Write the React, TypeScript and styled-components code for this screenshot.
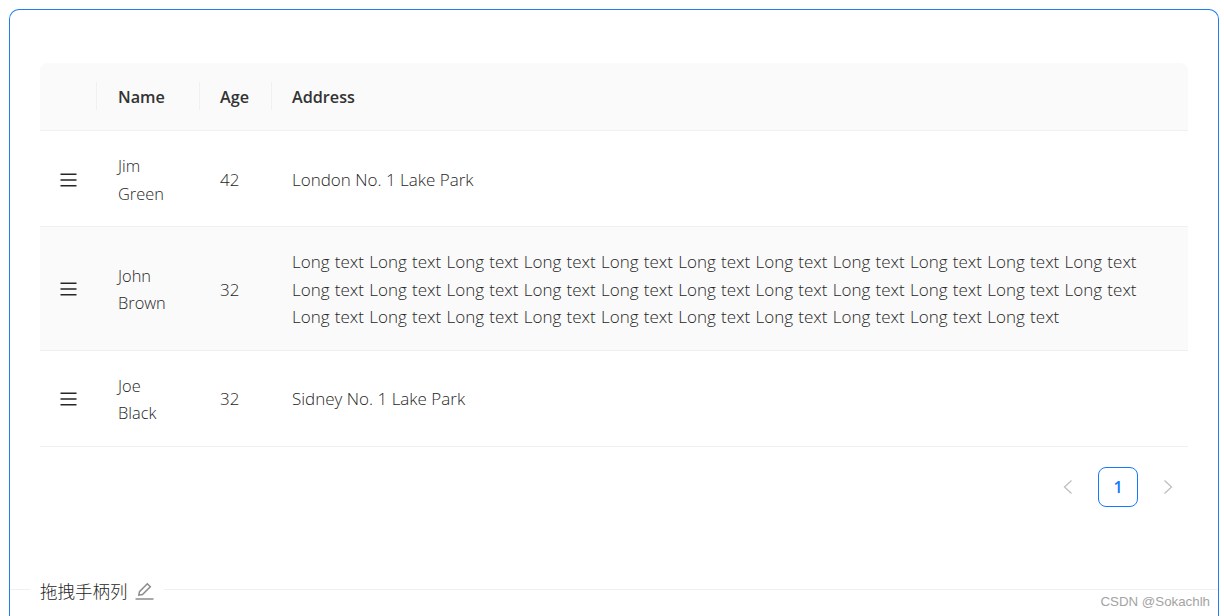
import styled, { createGlobalStyle } from 'styled-components';

const longText = Array(32).fill('Long text').join(' ');

const rows = [
  { key: 1, name: 'Jim Green', age: 42, address: 'London No. 1 Lake Park' },
  { key: 2, name: 'John Brown', age: 32, address: longText },
  { key: 3, name: 'Joe Black', age: 32, address: 'Sidney No. 1 Lake Park' },
];

const DragHandle = () => (
  <svg width="17" height="14" viewBox="0 0 17 14" fill="none" stroke="#262626" strokeWidth="1.4">
    <path d="M0.5 1.2h16M0.5 7h16M0.5 12.8h16" />
  </svg>
);

const EditIcon = () => (
  <svg width="19" height="18" viewBox="0 0 19 18" fill="none" stroke="#8c8c8c" strokeWidth="1.5">
    <path d="M3.8 13.2l.7-3.6 7.8-7.8 3 3-7.8 7.8z" />
    <path d="M0.5 17h18" />
  </svg>
);

const Chevron = ({ right }: { right?: boolean }) => (
  <svg width="10" height="14" viewBox="0 0 10 14" fill="none" stroke="#bfbfbf" strokeWidth="1.3">
    <path d={right ? 'M1.5 .5L8.5 7L1.5 13.5' : 'M8.5 .5L1.5 7L8.5 13.5'} />
  </svg>
);

const App = () => (
  <>
    <GlobalStyle />
    <Frame>
      <StyledTable>
        <colgroup>
          <col width={57} />
          <col width={103} />
          <col width={72} />
          <col />
        </colgroup>
        <thead>
          <tr>
            <HeadCell />
            <NameHeadCell>Name</NameHeadCell>
            <HeadCell>Age</HeadCell>
            <HeadCell>Address</HeadCell>
          </tr>
        </thead>
        <tbody>
          {rows.map((row) => (
            <Row key={row.key} $striped={row.key === 2}>
              <HandleCell>
                <DragHandle />
              </HandleCell>
              <NameCell>{row.name}</NameCell>
              <Cell>{row.age}</Cell>
              <Cell $loose={row.address === longText}>{row.address}</Cell>
            </Row>
          ))}
        </tbody>
      </StyledTable>

      <Pagination>
        <PageArrow>
          <Chevron />
        </PageArrow>
        <PageButton>1</PageButton>
        <PageArrow>
          <Chevron right />
        </PageArrow>
      </Pagination>

      <Divider>
        <DividerTitle>
          拖拽手柄列
          <EditIcon />
        </DividerTitle>
      </Divider>
    </Frame>
    <Watermark>CSDN @Sokachlh</Watermark>
  </>
);

export default App;

/** STYLED COMPONENTS  **/

const GlobalStyle = createGlobalStyle`
  html, body {
    margin: 0;
    height: 616px;
    overflow: hidden;
    background: #fff;
  }
  body {
    padding: 9px 5px 0 9px;
    box-sizing: border-box;
    font-family: "Open Sans", "Noto Sans CJK SC", sans-serif;
    font-size: 16px;
    color: #262626;
  }
`;

const Frame = styled.div`
  height: 607px;
  padding: 53px 30px 0;
  box-sizing: border-box;
  border: 1px solid #1f7cf2;
  border-bottom: none;
  border-radius: 10px 10px 0 0;
  overflow: hidden;
`;

const StyledTable = styled.table`
  width: 100%;
  table-layout: fixed;
  border-collapse: separate;
  border-spacing: 0;
  line-height: 27.5px;
`;

const HeadCell = styled.th`
  position: relative;
  height: 68px;
  box-sizing: border-box;
  padding: 20px 20px 18px;
  background: #fafafa;
  border-bottom: 1px solid #f0f0f0;
  text-align: left;
  font-weight: 600;
  font-size: 16.2px;
  color: #333;

  &:first-child {
    border-top-left-radius: 8px;
  }

  &:last-child {
    border-top-right-radius: 8px;
  }

  &:not(:last-child)::after {
    content: '';
    position: absolute;
    top: 19px;
    right: 0;
    width: 1px;
    height: 28px;
    background: #f0f0f0;
  }
`;

const NameHeadCell = styled(HeadCell)`
  padding-left: 21px;
`;

const Row = styled.tr<{ $striped?: boolean }>`
  background: ${({ $striped }) => ($striped ? '#fafafa' : '#fff')};
`;

const Cell = styled.td<{ $loose?: boolean }>`
  padding: 21px 20px 19px;
  border-bottom: 1px solid #f0f0f0;
  font-size: 17px;
  font-weight: 300;
  word-spacing: ${({ $loose }) => ($loose ? '0.85px' : '0')};
`;

const NameCell = styled(Cell)`
  padding-left: 21px;
  font-size: 16.4px;
`;

const HandleCell = styled(Cell)`
  line-height: 0;
`;

const Pagination = styled.div`
  display: flex;
  justify-content: flex-end;
  align-items: center;
  gap: 10px;
  margin-top: 20px;
`;

const PageArrow = styled.span`
  display: flex;
  align-items: center;
  justify-content: center;
  width: 40px;
  height: 40px;
`;

const PageButton = styled.span`
  display: flex;
  align-items: center;
  justify-content: center;
  width: 40px;
  height: 40px;
  box-sizing: border-box;
  border: 1px solid #1677ff;
  border-radius: 8px;
  color: #1677ff;
  font-weight: 600;
`;

const Divider = styled.div`
  display: flex;
  align-items: center;
  gap: 10px;
  margin: 70px -30px 0;

  &::before {
    content: '';
    width: 20px;
    height: 1px;
    background: #f0f0f0;
  }

  &::after {
    content: '';
    flex: 1;
    height: 1px;
    background: #f0f0f0;
  }
`;

const DividerTitle = styled.span`
  display: flex;
  align-items: center;
  gap: 7px;
  margin-top: 2px;
  line-height: 24px;
  font-size: 17.5px;
  font-weight: 300;
`;

const Watermark = styled.div`
  position: absolute;
  right: 14px;
  bottom: 3px;
  font-family: "Liberation Sans", sans-serif;
  font-size: 13.3px;
  line-height: 22px;
  color: #a3a3a3;
`;
